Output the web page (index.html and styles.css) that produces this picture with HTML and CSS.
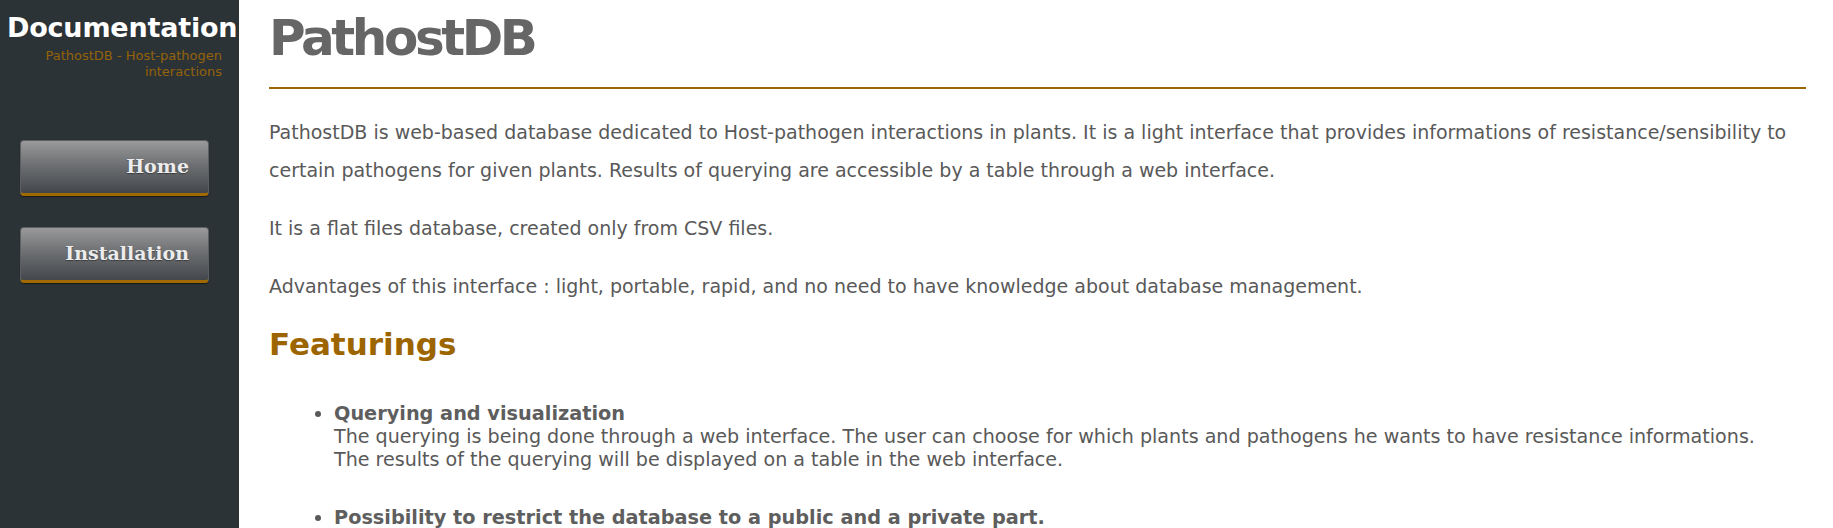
FILE: index.html
```html
<!DOCTYPE html>
<html>
<head>
<meta charset="utf-8">
<title>PathostDB Documentation</title>
<link rel="stylesheet" href="styles.css">
</head>
<body>
<div class="layout">
  <aside class="sidebar">
    <div class="brand">
      <div class="brand-title">Documentation</div>
      <div class="brand-sub">PathostDB - Host-pathogen<br>interactions</div>
    </div>
    <nav class="nav">
      <a class="nav-btn" href="#">Home</a>
      <a class="nav-btn" href="#">Installation</a>
    </nav>
  </aside>
  <main class="content">
    <h1 class="title">PathostDB</h1>
    <p class="para">PathostDB is web-based database dedicated to Host-pathogen interactions in plants. It is a light interface that provides informations of resistance/sensibility to certain pathogens for given plants. Results of querying are accessible by a table through a web interface.</p>
    <p class="para">It is a flat files database, created only from CSV files.</p>
    <p class="para">Advantages of this interface : light, portable, rapid, and no need to have knowledge about database management.</p>
    <h2 class="section">Featurings</h2>
    <ul class="features">
      <li class="feature"><strong>Querying and visualization</strong><br>The querying is being done through a web interface. The user can choose for which plants and pathogens he wants to have resistance informations.<br>The results of the querying will be displayed on a table in the web interface.</li>
      <li class="feature"><strong>Possibility to restrict the database to a public and a private part.</strong></li>
    </ul>
  </main>
</div>
</body>
</html>
```
FILE: styles.css
```css
html, body {
  margin: 0;
  padding: 0;
  height: 100%;
  overflow: hidden;
}
body {
  background: #ffffff;
  font-family: "DejaVu Sans", sans-serif;
}
.layout {
  display: flex;
  min-height: 100%;
}
.sidebar {
  width: 239px;
  flex: 0 0 239px;
  background: #2c3336;
  min-height: 528px;
}
.brand {
  padding: 8px 17px 0 7px;
}
.brand-title {
  font-family: "DejaVu Sans", sans-serif;
  font-weight: bold;
  font-size: 27px;
  letter-spacing: -0.2px;
  color: #ffffff;
  line-height: 40px;
  white-space: nowrap;
}
.brand-sub {
  text-align: right;
  color: #94620a;
  font-size: 13px;
  line-height: 16px;
}
.nav {
  display: flex;
  flex-direction: column;
  gap: 31px;
  padding: 60px 30px 0 20px;
}
.nav-btn {
  display: block;
  height: 52px;
  line-height: 51px;
  text-align: right;
  padding-right: 19px;
  font-family: "DejaVu Serif", serif;
  font-weight: bold;
  font-size: 19px;
  color: #ececec;
  text-decoration: none;
  text-shadow: 0 1px 1px rgba(0,0,0,0.4);
  background: linear-gradient(to bottom, #9a9a9a 0%, #6e7073 45%, #43474b 100%);
  border: 1px solid #5c6063;
  border-bottom: 3px solid #a06a00;
  border-radius: 4px;
  box-shadow: 0 1px 1px rgba(0,0,0,0.5);
}
.content {
  flex: 1;
  padding: 1px 27px 0 30px;
  color: #595959;
}
.title {
  margin: 0 0 24px;
  padding: 8px 0 20px;
  font-family: "DejaVu Sans", sans-serif;
  font-weight: bold;
  font-size: 50px;
  letter-spacing: -3.4px;
  color: #666666;
  border-bottom: 2px solid #9c6500;
}
.para {
  margin: 20px 0;
  font-size: 19px;
  line-height: 38px;
}
.section {
  margin: 21px 0 40px;
  font-size: 31px;
  font-weight: bold;
  color: #9c6500;
}
.features {
  margin: 0;
  padding-left: 65px;
  font-size: 19.1px;
  line-height: 23px;
  color: #595959;
}
.feature {
  margin-bottom: 35px;
}
.feature strong {
  font-size: 19.3px;
  color: #5e5e5e;
}
```
